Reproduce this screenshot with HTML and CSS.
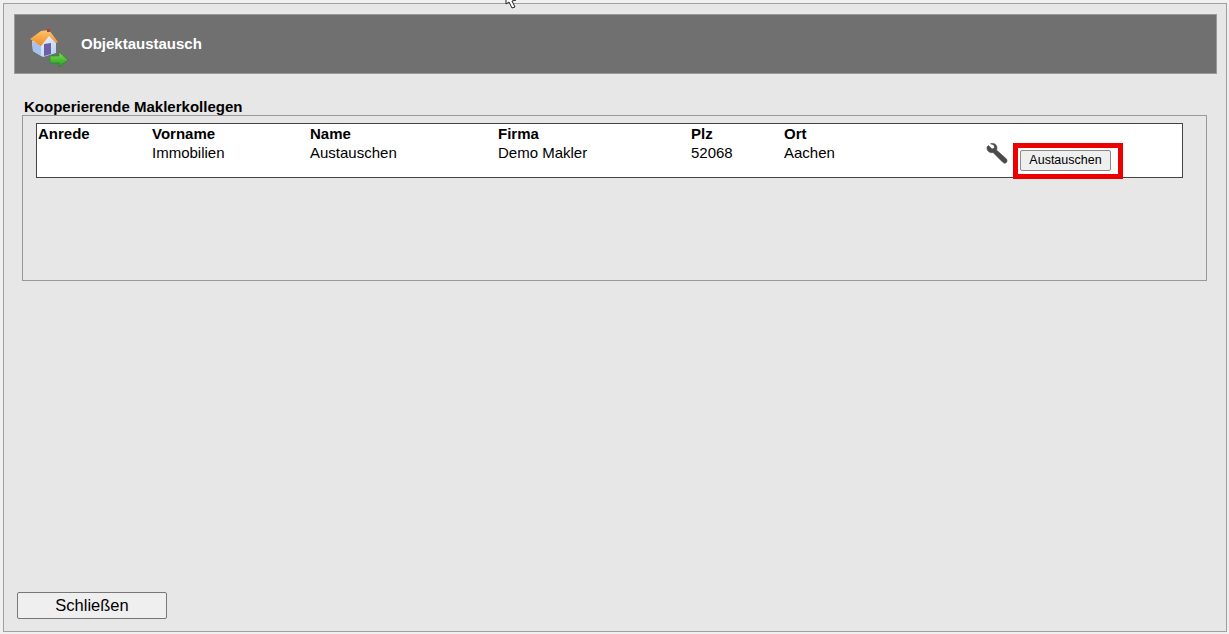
FILE: index.html
```html
<!DOCTYPE html>
<html lang="de">
<head>
<meta charset="utf-8">
<title>Objektaustausch</title>
<link rel="stylesheet" href="styles.css">
</head>
<body>
<svg class="cursor" width="16" height="10" viewBox="0 0 16 10"><path d="M1 -3 L1 4 L4 2 L7 8 L10 7 L7 1 L11 0 Z" fill="#fff" stroke="#222" stroke-width="1"/></svg>
<div class="window">
  <header class="head">
    <svg class="head-icon" width="40" height="40" viewBox="0 0 40 40">
      <defs>
        <linearGradient id="wall" x1="0" y1="0" x2="1" y2="1"><stop offset="0" stop-color="#ffffff"/><stop offset="1" stop-color="#b4cdf2"/></linearGradient>
        <linearGradient id="roof" x1="0" y1="0" x2="0" y2="1"><stop offset="0" stop-color="#ffc56b"/><stop offset="1" stop-color="#f08a24"/></linearGradient>
        <linearGradient id="arrow" x1="0" y1="0" x2="0" y2="1"><stop offset="0" stop-color="#86e050"/><stop offset="1" stop-color="#1f9a22"/></linearGradient>
      </defs>
      <path d="M3 12 L4 22 L14 28 L27 24 L27 12 L18 4 Z" fill="url(#wall)"/>
      <path d="M3 12 L4 22 L12 27 L12 16 Z" fill="#a5c2ec"/>
      <path d="M1 10 L12 2 L20 1 L29 13 L27 14 L20 7 L12 17 Z" fill="url(#roof)"/>
      <rect x="18" y="0" width="3" height="3" fill="#b5402a"/>
      <path d="M15 27 L15 15 L22 14 L22 25 Z" fill="#6a60a8"/>
      <path d="M21 27 L30 27 L30 23 L39 31 L30 38 L30 34 L21 34 Z" fill="url(#arrow)" stroke="#1c8a24" stroke-width=".6"/>
    </svg>
    <h1 class="head-title">Objektaustausch</h1>
  </header>
  <section class="group">
    <h2 class="group-title">Kooperierende Maklerkollegen</h2>
    <div class="group-box">
      <div class="list">
        <div class="row row-head">
          <span class="col-anrede">Anrede</span>
          <span class="col-vorname">Vorname</span>
          <span class="col-name">Name</span>
          <span class="col-firma">Firma</span>
          <span class="col-plz">Plz</span>
          <span class="col-ort">Ort</span>
        </div>
        <div class="row">
          <span class="col-anrede"></span>
          <span class="col-vorname">Immobilien</span>
          <span class="col-name">Austauschen</span>
          <span class="col-firma">Demo Makler</span>
          <span class="col-plz">52068</span>
          <span class="col-ort">Aachen</span>
          <span class="actions">
            <svg class="wrench" width="22" height="22" viewBox="0 0 22 22"><path d="M2.500 2.500 L6 6 L8.500 5 L8 2 L4.500 0.800 C8 -0.500 11 1.500 11 5 L10.500 7 L20.500 16 C21.500 17.500 21 19.500 19.500 20 C18.500 20.500 17.500 20 16.500 19 L7 9.500 C3.500 10.500 0.500 7.500 1 4 Z" fill="#4a4a4a" stroke="#4a4a4a" stroke-width=".6"/></svg>
            <span class="mark"><button class="btn-swap" type="button">Austauschen</button></span>
          </span>
        </div>
      </div>
    </div>
  </section>
  <footer class="foot">
    <button class="btn-close" type="button">Schließen</button>
  </footer>
</div>
</body>
</html>
```
FILE: styles.css
```css
html, body {
  margin: 0;
  padding: 0;
  height: 100%;
}
body {
  background: #f0f0f0;
  font-family: "Liberation Sans", Arial, sans-serif;
  color: #000;
  padding: 3px 2px 2px 3px;
  box-sizing: border-box;
  height: 634px;
  overflow: hidden;
  position: relative;
}
.cursor {
  position: absolute;
  left: 505px;
  top: 0;
}
.window {
  height: 100%;
  box-sizing: border-box;
  border: 1px solid #a0a0a0;
  background: #e7e7e7;
  padding: 10px 9px 12px 10px;
  display: flex;
  flex-direction: column;
}
.head {
  height: 60px;
  box-sizing: border-box;
  background: #707070;
  border: 1px solid #999;
  display: flex;
  align-items: center;
  padding-left: 14px;
}
.head-icon {
  flex: none;
  margin-top: 9px;
}
.head-title {
  margin: 0 0 2px 12px;
  font-size: 15px;
  font-weight: bold;
  color: #fff;
}
.group {
  margin: 25px 10px 0 8px;
}
.group-title {
  margin: 0 0 0 2px;
  font-size: 15px;
  line-height: 16px;
  font-weight: bold;
}
.group-box {
  height: 157px;
  border: 1px solid #999;
  padding: 7px 23px 0 13px;
}
.list {
  height: 55px;
  box-sizing: border-box;
  border: 1px solid #444;
  background: #fff;
  font-size: 15px;
  line-height: 19px;
  padding-left: 1px;
}
.row {
  display: flex;
  height: 19px;
  position: relative;
}
.row-head {
  font-weight: bold;
}
.col-anrede { width: 114px; }
.col-vorname { width: 158px; }
.col-name { width: 188px; }
.col-firma { width: 193px; }
.col-plz { width: 93px; }
.col-ort { width: 201px; }
.actions {
  display: flex;
  align-items: flex-start;
}
.wrench {
  margin: 0 0 0 1px;
}
.mark {
  position: absolute;
  left: 975px;
  top: 0;
  width: 110px;
  height: 36px;
  box-sizing: border-box;
  border: 5px solid #ec0000;
  padding: 2px 0 0 2px;
}
.btn-swap {
  display: block;
  width: 91px;
  height: 21px;
  box-sizing: border-box;
  padding: 0 0 2px;
  border: 1px solid #8a8a8a;
  border-radius: 2px;
  background: #efefef;
  font-family: "Liberation Sans", Arial, sans-serif;
  font-size: 12.500px;
  color: #000;
}
.foot {
  margin-top: auto;
  padding-left: 3px;
}
.btn-close {
  display: block;
  width: 150px;
  height: 27px;
  box-sizing: border-box;
  padding: 0;
  border: 1px solid #777;
  border-radius: 2px;
  background: #efefef;
  font-family: "Liberation Sans", Arial, sans-serif;
  font-size: 16.500px;
  color: #000;
}
```
